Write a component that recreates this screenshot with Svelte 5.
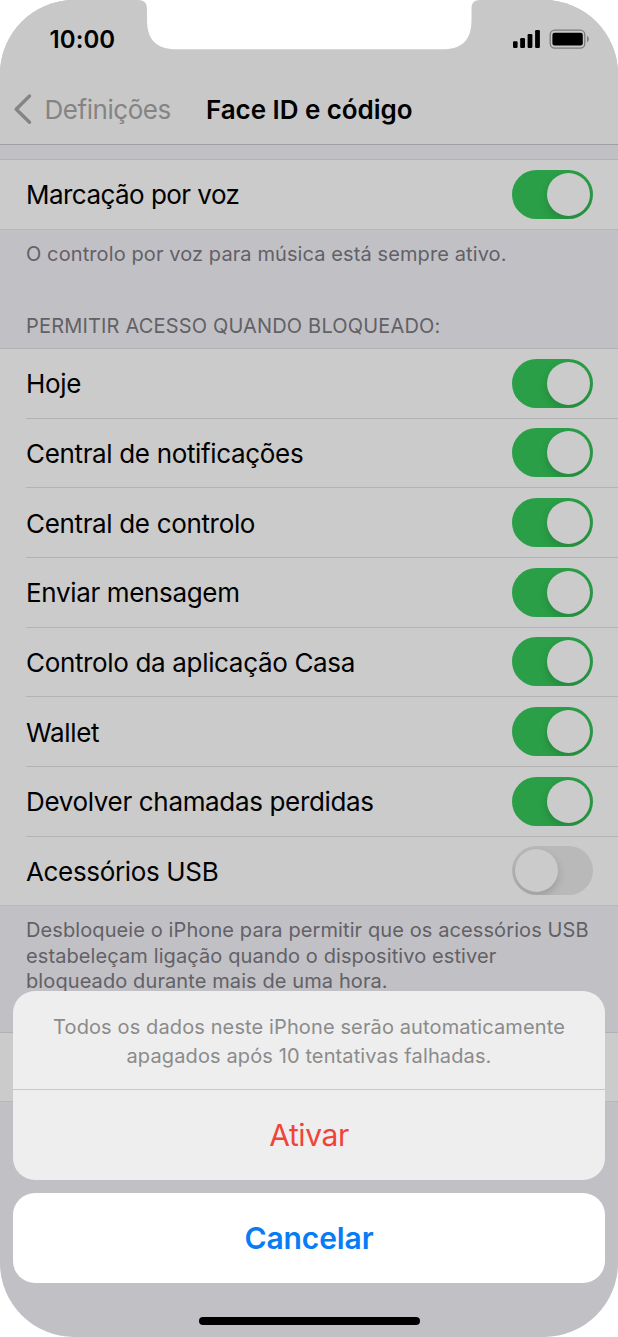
<script>
  let voice = true;

  let items = [
    { label: 'Hoje', on: true },
    { label: 'Central de notificações', on: true },
    { label: 'Central de controlo', on: true },
    { label: 'Enviar mensagem', on: true },
    { label: 'Controlo da aplicação Casa', on: true },
    { label: 'Wallet', on: true },
    { label: 'Devolver chamadas perdidas', on: true },
    { label: 'Acessórios USB', on: false }
  ];

  const toggle = (i) => {
    items[i].on = !items[i].on;
  }
</script>

<div class="phone">
  <header>
    <div class="status">
      <span class="time">10:00</span>
      <svg width="78" height="22" viewBox="0 0 78 22" aria-hidden="true">
        <rect x="1" y="13.3" width="4.6" height="6.7" rx="1.2" />
        <rect x="8.2" y="10" width="4.8" height="10" rx="1.2" />
        <rect x="15.6" y="6" width="4.8" height="14" rx="1.2" />
        <rect x="23.1" y="2" width="4.8" height="18" rx="1.2" />
        <rect x="38.2" y="2.2" width="34.6" height="17.9" rx="4.6" fill="none" stroke="#7c7c7c" stroke-width="1.3" />
        <rect x="40.4" y="4.7" width="30.4" height="12.8" rx="2.2" />
        <path d="M75 8.1 C77.4 9.4 77.4 12.9 75 14.2Z" fill="#7c7c7c" />
      </svg>
    </div>
    <nav>
      <button class="back">
        <svg width="20" height="32" viewBox="0 0 20 32" aria-hidden="true">
          <path d="M16.5 3 L3.2 16.2 L16.5 29.3" fill="none" stroke="#848484" stroke-width="3.4" stroke-linecap="round" stroke-linejoin="round" />
        </svg>
        <span>Definições</span>
      </button>
      <h1>Face ID e código</h1>
    </nav>
  </header>

  <main>
    <section class="group first">
      <div class="row">
        <span>Marcação por voz</span>
        <button class="switch" class:on={voice} on:click={() => voice = !voice} aria-label="Marcação por voz"><i></i></button>
      </div>
    </section>
    <p class="note">O controlo por voz para música está sempre ativo.</p>

    <h2>PERMITIR ACESSO QUANDO BLOQUEADO:</h2>
    <section class="group">
      {#each items as item, i}
        <div class="row">
          <span>{item.label}</span>
          <button class="switch" class:on={item.on} on:click={() => toggle(i)} aria-label={item.label}><i></i></button>
        </div>
      {/each}
    </section>
    <p class="note long">
      Desbloqueie o iPhone para permitir que os acessórios USB<br />
      estabeleçam ligação quando o dispositivo estiver<br />
      bloqueado durante mais de uma hora.
    </p>
    <section class="group last"></section>
  </main>

  <!-- action sheet over the list -->
  <div class="sheet">
    <div class="card">
      <p>Todos os dados neste iPhone serão automaticamente<br />apagados após 10 tentativas falhadas.</p>
      <button class="confirm">Ativar</button>
    </div>
    <button class="cancel">Cancelar</button>
    <div class="home"></div>
  </div>

  <svg class="notch" width="346" height="50" viewBox="0 0 346 50" aria-hidden="true">
    <path d="M2 0 C8 0 11 3 11 9 V20 C11 40 21 49.3 40 49.3 H307 C326 49.3 335.5 40 335.5 20 V9 C335.5 3 338 0 344 0 Z" fill="#fff" />
  </svg>
</div>

<style>
  :global(body) {
    background: #fff;
  }

  .phone {
    position: relative;
    width: 618px;
    height: 1337px;
    overflow: hidden;
    border-radius: 74px;
    background: #c1c0c5;
    font-family: Inter, "Liberation Sans", sans-serif;
    color: #000;
  }

  button {
    border: none;
    padding: 0;
    background: none;
    font: inherit;
    letter-spacing: inherit;
    cursor: pointer;
  }

  header {
    box-sizing: border-box;
    height: 145px;
    background: #c8c8c8;
    border-bottom: 1px solid #a1a1a5;
  }

  .status {
    display: flex;
    justify-content: space-between;
    align-items: center;
    height: 78px;
    padding: 0 28px 0 49.5px;
  }

  .time {
    font-size: 24px;
    font-weight: 600;
    letter-spacing: 0.1px;
  }

  nav {
    display: flex;
    align-items: center;
    height: 62px;
  }

  .back {
    display: flex;
    align-items: center;
    box-sizing: border-box;
    width: 206px;
    padding-left: 13px;
    gap: 11.5px;
    font-size: 26px;
    letter-spacing: -0.45px;
    color: #848484;
  }

  h1 {
    margin: 0;
    font-size: 26px;
    font-weight: 600;
    letter-spacing: -0.05px;
  }

  .group {
    background: #cbcbcb;
    border-top: 1px solid #b1b1b4;
    border-bottom: 1px solid #b8b8ba;
  }

  .first {
    margin-top: 14px;
  }

  .row {
    display: flex;
    align-items: center;
    justify-content: space-between;
    box-sizing: border-box;
    height: 69.7px;
    margin-left: 26px;
    padding-right: 25px;
    font-size: 26px;
    letter-spacing: -0.34px;
    border-bottom: 1px solid #b3b3b4;
  }

  .row:last-child {
    height: 68.5px;
    border-bottom: none;
  }

  .first .row {
    letter-spacing: -0.54px;
  }

  .row span {
    padding-top: 1px;
  }

  .switch {
    display: flex;
    width: 81px;
    height: 49px;
    padding: 3px;
    box-sizing: border-box;
    border-radius: 25px;
    background: #b9b9b9;
    overflow: hidden;
  }

  .switch.on {
    justify-content: flex-end;
    background: #2a9f47;
  }

  .switch i {
    width: 43px;
    height: 43px;
    border-radius: 50%;
    background: #cbcbcb;
    box-shadow: 0 4px 9px rgba(0, 0, 0, 0.16);
  }

  .note {
    margin: 0;
    padding: 11px 26px 0;
    font-size: 20px;
    line-height: 26px;
    letter-spacing: 0.1px;
    color: #626166;
  }

  h2 {
    margin: 0;
    padding: 46px 26px 9.4px;
    font-size: 20px;
    font-weight: 400;
    line-height: 26px;
    letter-spacing: 0.17px;
    color: #626166;
  }

  .long {
    padding-top: 12px;
    line-height: 25.5px;
    white-space: nowrap;
  }

  .last {
    height: 68px;
    margin-top: 37px;
  }

  .sheet {
    position: absolute;
    left: 13px;
    right: 13px;
    bottom: 12.5px;
    display: flex;
    flex-direction: column;
  }

  .card {
    display: flex;
    flex-direction: column;
    height: 189px;
    border-radius: 22px;
    background: #eee;
    overflow: hidden;
  }

  .card p {
    box-sizing: border-box;
    height: 99px;
    margin: 0;
    padding-top: 22px;
    border-bottom: 1px solid #c8c8c8;
    font-size: 20px;
    line-height: 28.5px;
    letter-spacing: 0.12px;
    text-align: center;
    color: #8b8b8b;
  }

  .confirm {
    flex: 1;
    font-size: 30px;
    letter-spacing: -0.4px;
    color: #f0443a;
  }

  .cancel {
    height: 90px;
    margin-top: 13px;
    border-radius: 22px;
    background: #fff;
    font-size: 30px;
    font-weight: 600;
    letter-spacing: -0.1px;
    color: #087bf5;
  }

  .home {
    align-self: center;
    width: 221px;
    height: 8px;
    margin-top: 33.5px;
    border-radius: 4px;
    background: #000;
  }

  .notch {
    position: absolute;
    top: 0;
    left: 136px;
  }
</style>
